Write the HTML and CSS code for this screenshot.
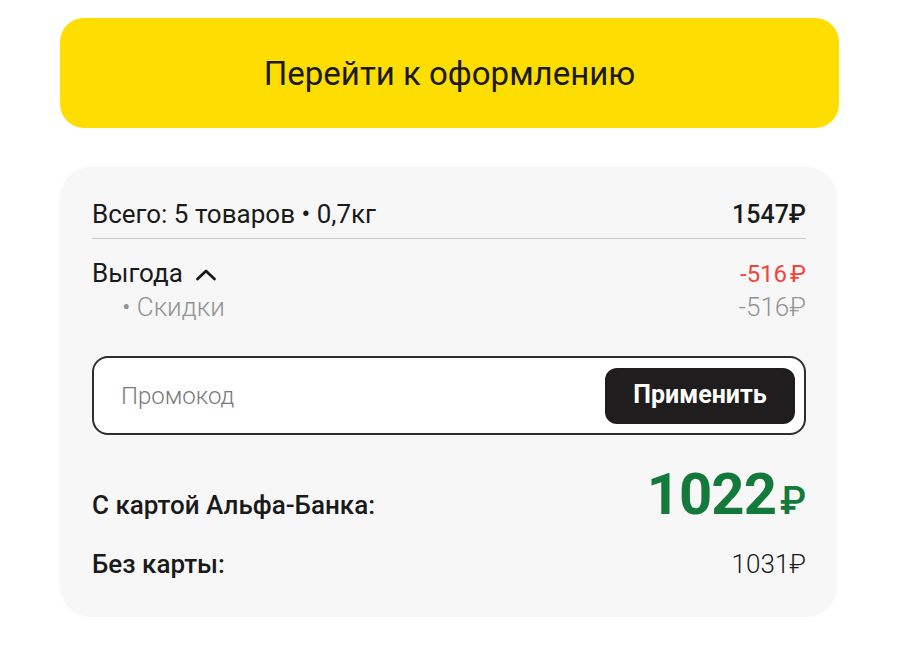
FILE: index.html
```html
<!DOCTYPE html>
<html lang="ru">
<head>
<meta charset="utf-8">
<link rel="stylesheet" href="styles.css">
</head>
<body>
<div class="page">
  <button class="checkout-btn">Перейти к оформлению</button>
  <section class="summary">
    <div class="row total">
      <span class="label">Всего: 5 товаров • 0,7кг</span>
      <span class="value strong">1547₽</span>
    </div>
    <div class="sep"></div>
    <div class="row benefit">
      <span class="label">Выгода
        <svg class="chevron" width="22" height="13" viewBox="0 0 22 13"><polyline points="2.5,11 11,3 19.5,11" fill="none" stroke="#1a1a1a" stroke-width="2.8" stroke-linecap="round" stroke-linejoin="round"/></svg>
      </span>
      <span class="value red">-516&#8239;₽</span>
    </div>
    <div class="row sub">
      <span class="label">• Скидки</span>
      <span class="value">-516₽</span>
    </div>
    <div class="promo">
      <span class="placeholder">Промокод</span>
      <button class="apply">Применить</button>
    </div>
    <div class="row card-price">
      <span class="label">С картой Альфа-Банка:</span>
      <span class="value big">1022<span class="rub">₽</span></span>
    </div>
    <div class="row no-card">
      <span class="label">Без карты:</span>
      <span class="value light">1031₽</span>
    </div>
  </section>
</div>
</body>
</html>
```
FILE: styles.css
```css
* { box-sizing: border-box; }
body {
  margin: 0;
  background: #ffffff;
  font-family: Roboto, "Noto Sans", "DejaVu Sans", sans-serif;
  color: #1a1a1a;
}
.page {
  width: 779px;
  margin-left: 60px;
  padding-top: 18px;
}
.checkout-btn {
  display: flex;
  align-items: center;
  justify-content: center;
  width: 779px;
  height: 110px;
  border: none;
  border-radius: 24px;
  background: #fedd00;
  font-family: inherit;
  font-size: 33px;
  color: #1a1a1a;
  padding: 0;
}
.summary {
  margin-top: 39px;
  width: 777px;
  height: 450px;
  background: #f7f7f7;
  border-radius: 32px;
  padding: 32px 31px 0 32px;
  box-shadow: 0 0 6px rgba(0,0,0,0.03);
}
.row {
  display: flex;
  justify-content: space-between;
  align-items: baseline;
  font-size: 26px;
  line-height: 30px;
  height: 30px;
}
.total .label { font-weight: 400; }
.strong { font-weight: 500; font-size: 25px; }
.sep {
  height: 1px;
  background: #c9c9c9;
  margin: 9px 0 0;
}
.benefit { margin-top: 19px; }
.benefit .label { display: flex; align-items: center; gap: 12px; }
.chevron { display: block; margin-top: 2px; }
.red { color: #f2453a; font-size: 24px; }
.sub { margin-top: 4px; color: #939393; font-weight: 300; }
.sub .label { padding-left: 30px; }
.promo {
  margin-top: 34px;
  height: 79px;
  border: 2px solid #2e2e2e;
  border-radius: 16px;
  background: #ffffff;
  display: flex;
  align-items: center;
  justify-content: space-between;
  padding: 0 9px 0 27px;
}
.placeholder {
  font-size: 24px;
  color: #7a7a7a;
  font-weight: 300;
}
.apply {
  width: 190px;
  height: 56px;
  border: none;
  border-radius: 12px;
  background: #1f1d1d;
  color: #ffffff;
  font-family: inherit;
  font-size: 25px;
  font-weight: 700;
  padding: 0 0 2px;
}
.card-price { margin-top: 30px; line-height: 58px; height: 58px; }
.card-price .label { font-weight: 500; }
.big {
  color: #137a3b;
  font-size: 58px;
  font-weight: 700;
  letter-spacing: -1px;
}
.rub {
  font-size: 38px;
  font-weight: 500;
  margin-left: 4px;
  letter-spacing: 0;
}
.no-card { margin-top: 26px; }
.no-card .label { font-weight: 500; }
.light { font-weight: 300; }
```
